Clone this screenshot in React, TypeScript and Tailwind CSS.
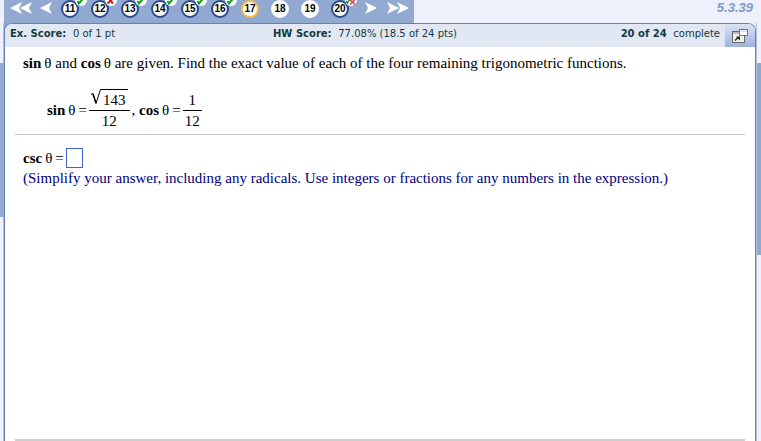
import type { ReactNode } from "react";

type Status = "correct" | "wrong" | "partial" | "current" | "todo";

const questions: { id: number; status: Status }[] = [
  { id: 11, status: "correct" },
  { id: 12, status: "wrong" },
  { id: 13, status: "correct" },
  { id: 14, status: "correct" },
  { id: 15, status: "correct" },
  { id: 16, status: "correct" },
  { id: 17, status: "current" },
  { id: 18, status: "todo" },
  { id: 19, status: "todo" },
  { id: 20, status: "partial" },
];

const ringColor: Record<Status, string> = {
  correct: "border-[#2b4a8c]",
  wrong: "border-[#2b4a8c]",
  partial: "border-[#2b4a8c]",
  current: "border-[#f9bd45]",
  todo: "border-white",
};

function StatusMark({ status }: { status: Status }) {
  if (status === "current" || status === "todo") return null;
  return (
    <svg className="absolute -top-2 left-3" width="12" height="14" viewBox="0 0 12 14" aria-hidden="true">
      <circle cx="6" cy="6" r="6" fill="#fff" />
      {status === "correct" && <path d="M2.500 7l1.500 2.500L8.500 4" fill="none" stroke="#12a01c" strokeWidth="2" />}
      {status === "wrong" && <path d="M3 4l5 5.500M8.500 4l-6 5.500" fill="none" stroke="#e01818" strokeWidth="2" />}
      {status === "partial" && (
        <>
          <path d="M1 7l1.500 2L5 5" fill="none" stroke="#12a01c" strokeWidth="1.500" />
          <path d="M5 5.500l5 5M10 5.500l-5 5" fill="none" stroke="#e8384c" strokeWidth="1.500" />
        </>
      )}
    </svg>
  );
}

function ArrowButton({ label, double, back }: { label: string; double?: boolean; back?: boolean }) {
  const w = double ? 22 : 12;
  return (
    <button type="button" aria-label={label}>
      <svg width={w} height="14" viewBox={`0 0 ${w} 14`} className={back ? "-scale-x-100" : ""}>
        <path d="M0 1l12 6-12 6 3-6z" fill="#fff" />
        {double && <path d="M10 1l12 6-12 6 3-6z" fill="#fff" />}
      </svg>
    </button>
  );
}

function QuestionNav() {
  return (
    <nav className="flex h-[23px] items-start overflow-hidden bg-[#92a9d2] pr-[5px] pl-[6px]">
      <div className="flex h-4 items-center gap-2">
        <ArrowButton label="First questions" double back />
        <ArrowButton label="Previous question" back />
      </div>
      <ol className="ml-[3px] flex">
        {questions.map((q) => (
          <li key={q.id} className="flex w-[30px] justify-center">
            <button
              type="button"
              className={`relative flex size-[18px] items-center justify-center rounded-full border-2 bg-white font-['Liberation_Sans',sans-serif] text-[10px] leading-none font-bold text-black ${ringColor[q.status]}`}
            >
              {q.id}
              <StatusMark status={q.status} />
            </button>
          </li>
        ))}
      </ol>
      <div className="ml-2.5 flex h-4 items-center gap-2.5">
        <ArrowButton label="Next question" />
        <ArrowButton label="Last questions" double />
      </div>
    </nav>
  );
}

function Fraction({ top, bottom }: { top: ReactNode; bottom: string }) {
  return (
    <span className="inline-flex flex-col items-center">
      <span className="flex h-[21px] items-end justify-center px-0.5 leading-5">{top}</span>
      <span className="w-full border-t border-black px-0.5 text-center leading-5">{bottom}</span>
    </span>
  );
}

function Root({ children }: { children: string }) {
  return (
    <span className="flex h-[21px] items-start">
      <svg width="10" height="16" viewBox="0 0 10 16" aria-label="square root of">
        <path d="M0 5.500l2-1 3 10L9.500.5h.5" fill="none" stroke="#000" />
        <path d="M2 5l3 9" stroke="#000" strokeWidth="1.500" />
      </svg>
      <span className="border-t border-black px-0.5 leading-5">{children}</span>
    </span>
  );
}

// Function name and angle, set with the narrow gap used in the exercises
function Trig({ fn }: { fn: string }) {
  return (
    <>
      <b>{fn}</b>&thinsp;θ
    </>
  );
}

function PopOutIcon() {
  return (
    <svg width="16" height="14" viewBox="0 0 16 14" aria-hidden="true">
      <rect x=".5" y="2.500" width="12" height="11" fill="#f3f3ee" stroke="#666" />
      <path d="M1 4h11" stroke="#bbb" strokeWidth="2" />
      <rect x="7.500" y=".5" width="8" height="6" fill="#fff" stroke="#777" />
      <path d="M8 2h7" stroke="#c9cedb" />
      <path d="M3 11.500l3-3" stroke="#222" strokeWidth="1.500" />
      <path d="M4 7.500h4v4z" fill="#222" />
    </svg>
  );
}

export default function App() {
  return (
    <div className="flex min-h-screen flex-col bg-[#eef1fc]">
      <header className="flex justify-between pr-2 pl-1">
        <QuestionNav />
        <p className="font-['Liberation_Sans',sans-serif] text-[13px] leading-4 font-bold text-[#7f9bd0] italic">5.3.39</p>
      </header>

      <div className="flex grow">
        <div className="w-1 border-r border-[#b5c1dc] pt-10">
          <div className="h-[154px] w-1 bg-[#92a9d2]" />
        </div>

        <div className="flex min-w-0 grow bg-linear-to-r from-[#92a9d2] from-50% to-[#eef1fc] to-50%">
          <main className="flex min-w-0 grow flex-col overflow-hidden rounded-t-lg border border-b-0 border-[#6480b4] bg-white">
            <div className="flex h-[23px] items-stretch bg-[#e2e8f3]">
              <div className="flex grow justify-between px-[5px] font-['DejaVu_Sans',sans-serif] text-[10px] leading-5 text-[#123a40]">
                <p className="flex-1 whitespace-pre">
                  <b>Ex. Score: </b> 0 of 1 pt
                </p>
                <p className="whitespace-pre">
                  <b>HW Score: </b> 77.08% (18.5 of 24 pts)
                </p>
                <p className="flex-1 text-right whitespace-pre">
                  <b>20 of 24 </b> complete
                </p>
              </div>
              <button
                type="button"
                aria-label="Open in new window"
                className="flex w-[30px] items-center justify-center bg-linear-to-b from-[#dbe3f4] to-[#9fb2df]"
              >
                <PopOutIcon />
              </button>
            </div>

            <div className="mx-2.5 flex grow flex-col border-b-2 border-[#cfcfcf] font-['Liberation_Serif',serif] text-[15px] text-black">
              <section className="border-b border-[#c8c8c8] px-2 pt-1.5 pb-[3px]">
                <p className="leading-5">
                  <Trig fn="sin" /> and <Trig fn="cos" /> are given. Find the exact value of each of the four remaining
                  trigonometric functions.
                </p>
                <div className="mt-4 ml-6 flex items-center gap-0.5">
                  <span>
                    <Trig fn="sin" />
                    &thinsp;=
                  </span>
                  <Fraction top={<Root>143</Root>} bottom="12" />
                  <span>
                    , <Trig fn="cos" />
                    &thinsp;=
                  </span>
                  <Fraction top="1" bottom="12" />
                </div>
              </section>

              <section className="px-2 pt-3">
                <label className="flex items-center gap-0.5">
                  <span>
                    <Trig fn="csc" />
                    &thinsp;=
                  </span>
                  <input type="text" className="h-5 w-[17px] border border-[#3566cc] bg-white outline-none" />
                </label>
                <p className="leading-4 text-[#000080]">
                  (Simplify your answer, including any radicals. Use integers or fractions for any numbers in the expression.)
                </p>
              </section>
            </div>
          </main>
        </div>

        <div className="w-[5px] border-l border-[#b5c1dc] pt-10">
          <div className="h-48 bg-[#92a9d2]" />
        </div>
      </div>
    </div>
  );
}
